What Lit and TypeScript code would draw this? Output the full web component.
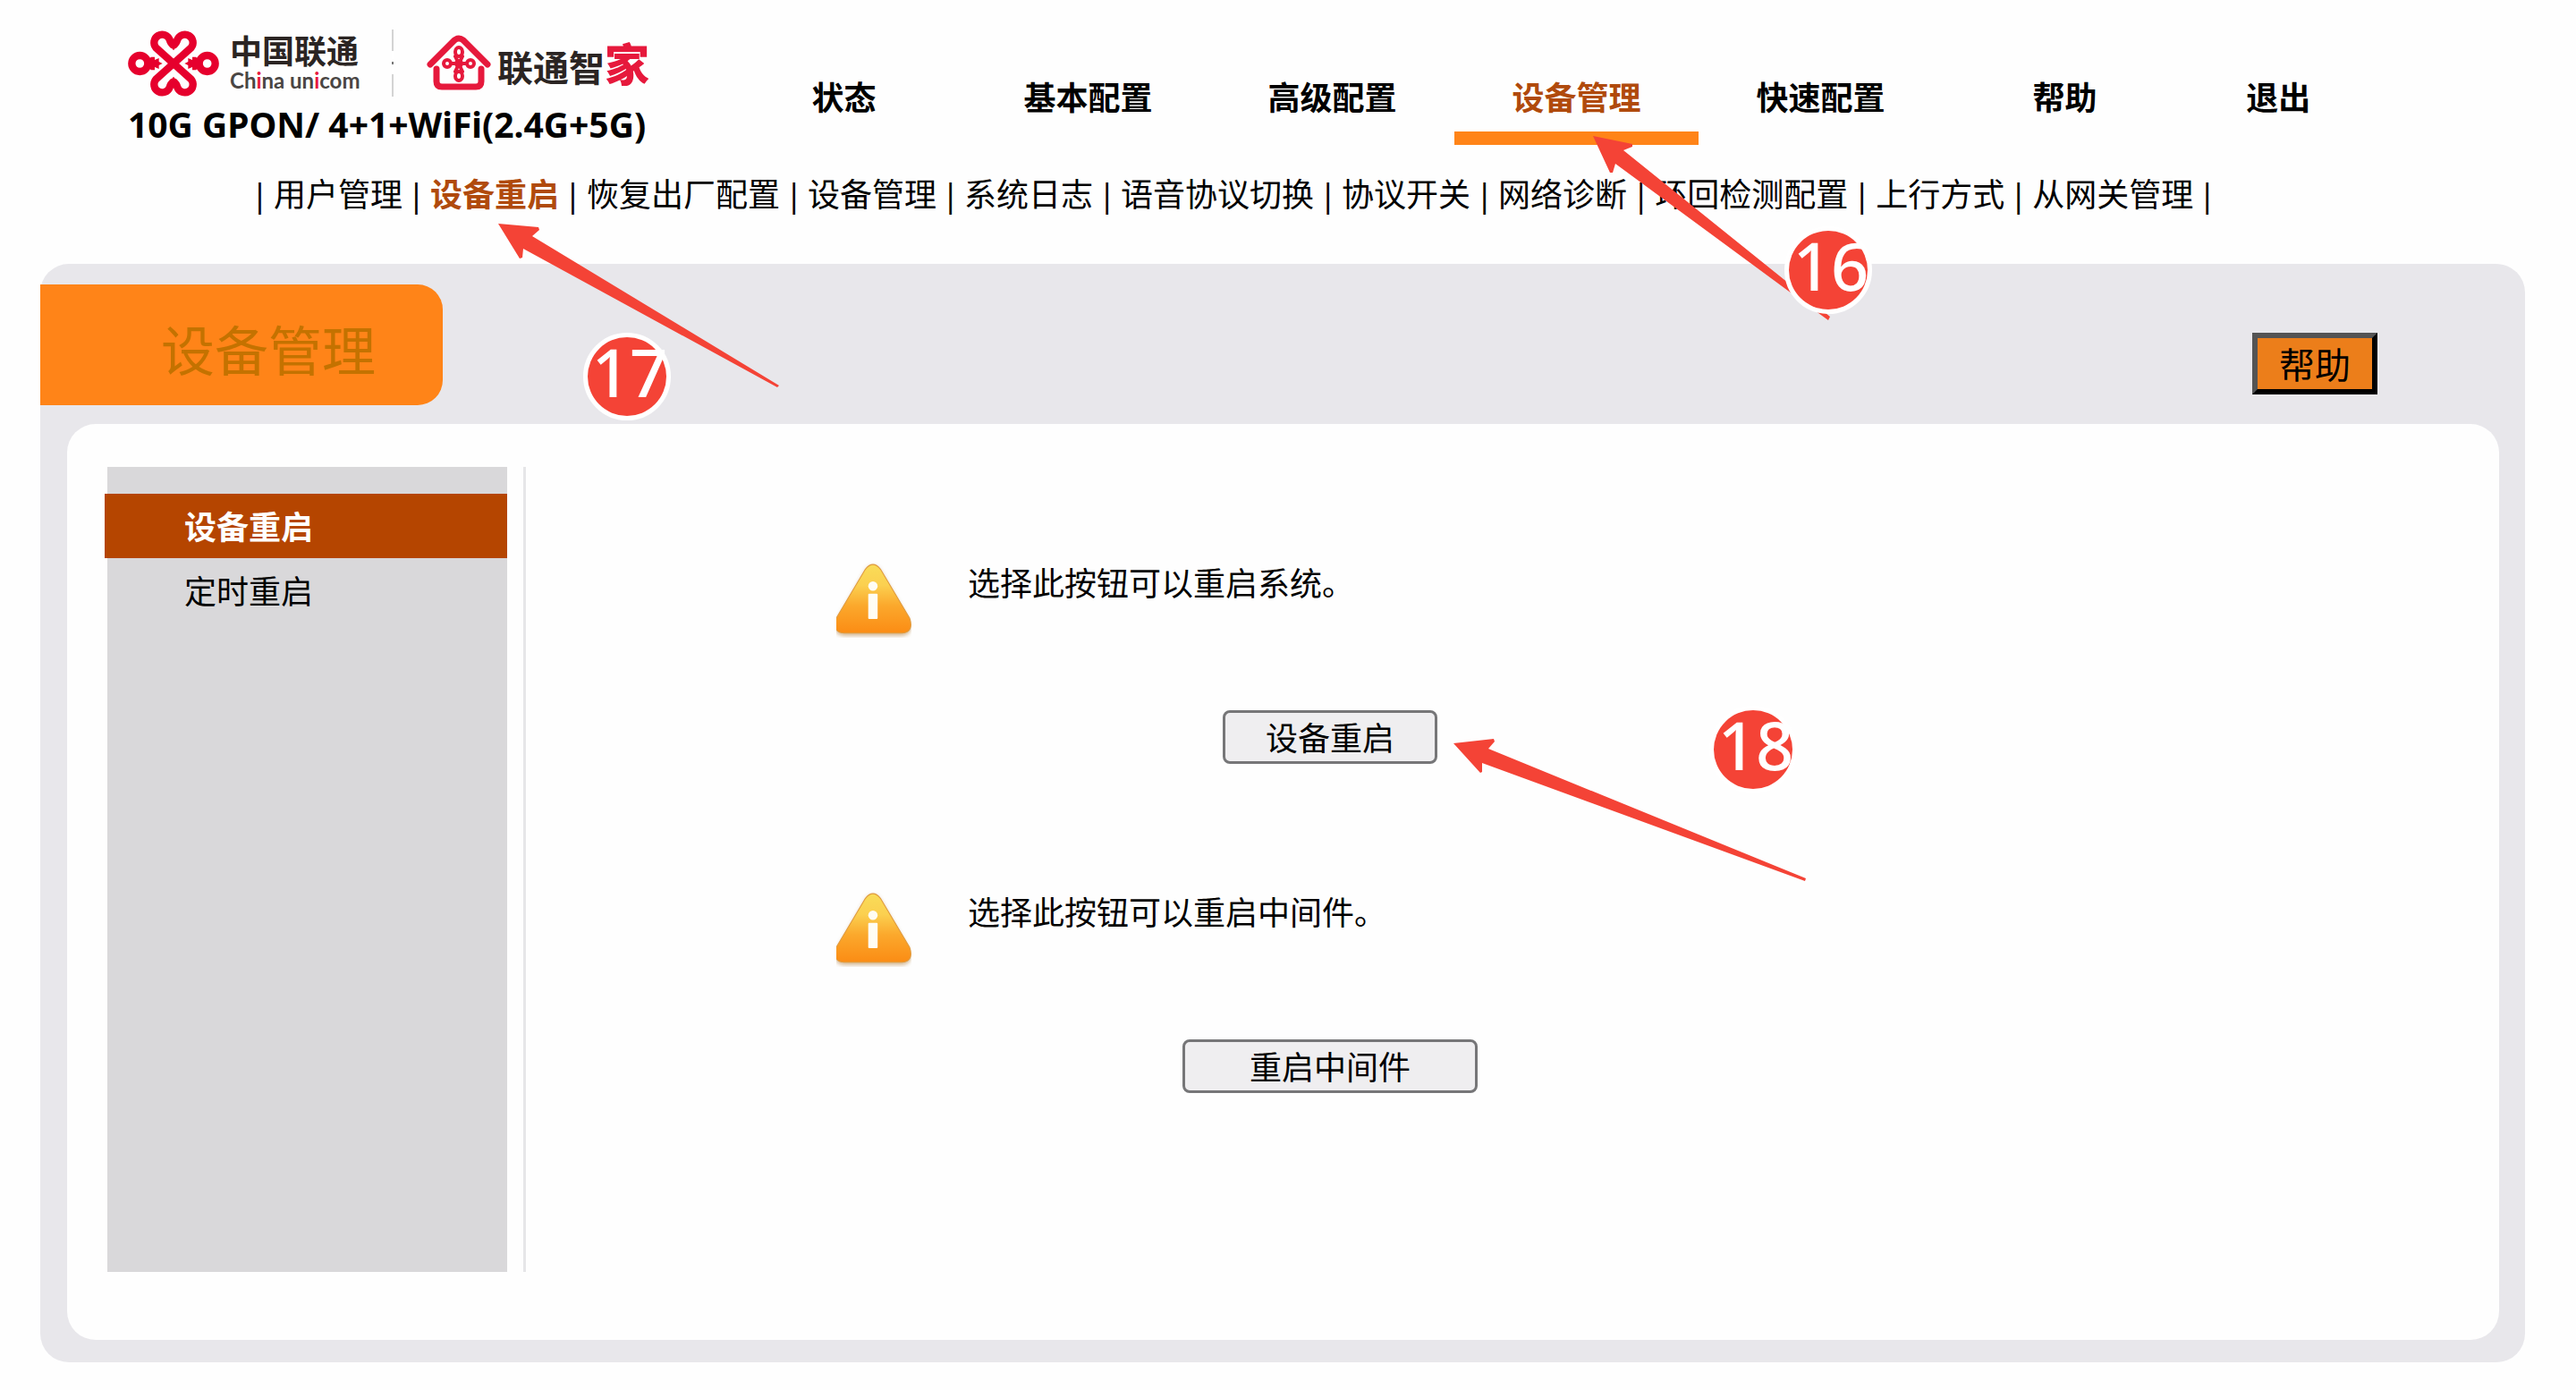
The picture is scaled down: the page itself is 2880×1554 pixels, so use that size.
import { LitElement, html, svg, css } from "lit";
import { customElement, state } from "lit/decorators.js";
import { classMap } from "lit/directives/class-map.js";

const MAIN_NAV = ["状态", "基本配置", "高级配置", "设备管理", "快速配置", "帮助", "退出"];
const SUB_NAV = [
  "用户管理",
  "设备重启",
  "恢复出厂配置",
  "设备管理",
  "系统日志",
  "语音协议切换",
  "协议开关",
  "网络诊断",
  "环回检测配置",
  "上行方式",
  "从网关管理",
];
const SIDE_NAV = ["设备重启", "定时重启"];

@customElement("brand-logo")
class BrandLogo extends LitElement {
  static styles = css`
    :host {
      display: flex;
      align-items: flex-start;
      height: 75px;
      white-space: nowrap;
      color: #2b2523;
      font-family: "Noto Sans", "Noto Sans CJK SC", sans-serif;
    }
    .knot {
      flex: none;
      width: 102px;
      height: 76px;
    }
    .carrier {
      display: flex;
      flex-direction: column;
      width: 144px;
      margin-left: 12px;
      padding-top: 6px;
    }
    .cn {
      font-size: 36px;
      line-height: 38px;
      font-weight: 700;
    }
    .en {
      font-family: Lato, "Noto Sans", sans-serif;
      font-size: 24px;
      line-height: 26px;
      font-weight: 700;
      color: #4a4644;
    }
    .dot {
      color: #e6193c;
    }
    .divider {
      width: 2px;
      height: 75px;
      margin: 0 37px 0 37px;
      background: linear-gradient(#d4d4d4 0 24px, #fff 24px 36px, #777 36px 39px, #fff 39px 50px, #d4d4d4 50px);
    }
    .house {
      flex: none;
      width: 72px;
      height: 64px;
      margin-top: 5px;
    }
    .home {
      display: flex;
      align-items: baseline;
      margin-left: 7px;
      padding-top: 3px;
      font-size: 40px;
      line-height: 72px;
      font-weight: 700;
    }
    .jia {
      font-size: 50px;
      font-weight: 900;
      color: #e6193c;
    }
  `;

  render() {
    return html`
      <svg class="knot" viewBox="40 38 306 228" aria-hidden="true">
        <g fill="none" stroke="#e6002d" stroke-width="25" stroke-linejoin="round">
          <path d="M193 152 L134 99 A27 27 0 1 1 180 72 Q183 84 193 92" />
          <path d="M193 152 L252 99 A27 27 0 1 0 206 72 Q203 84 193 92" />
          <path d="M193 152 L134 205 A27 27 0 1 0 180 232 Q183 220 193 212" />
          <path d="M193 152 L252 205 A27 27 0 1 1 206 232 Q203 220 193 212" />
          <circle cx="80" cy="152" r="27" />
          <circle cx="306" cy="152" r="27" />
        </g>
        <g fill="#e6002d">
          <path d="M176 76 h34 l-7 20 -10 12 -10 -12z" />
          <path d="M176 228 h34 l-7 -20 -10 -12 -10 12z" />
          <path d="M104 144 l14 -14 h12 v10 l14 -6 v12 l12 6 -12 6 v12 l-14 -6 v10 h-12 l-14 -14z" />
          <path d="M282 144 l-14 -14 h-12 v10 l-14 -6 v12 l-12 6 12 6 v12 l14 -6 v10 h12 l14 -14z" />
        </g>
      </svg>
      <div class="carrier">
        <span class="cn">中国联通</span>
        <span class="en">Ch<span class="dot">i</span>na un<span class="dot">i</span>com</span>
      </div>
      <span class="divider"></span>
      <svg class="house" viewBox="478 38 72 64" aria-hidden="true">
        <g fill="none" stroke="#e6193c" stroke-linecap="round" stroke-linejoin="round">
          <path stroke-width="7" d="M482 72 L509 45 Q514 41 519 45 L546 72" />
          <path stroke-width="7" d="M489 77 V91 Q489 97 495 97 H533 Q539 97 539 91 V77" />
          <g stroke-width="4">
            <ellipse cx="514" cy="58" rx="4" ry="5" />
            <ellipse cx="514" cy="85" rx="4" ry="5" />
            <circle cx="501" cy="71" r="4" />
            <circle cx="527" cy="71" r="4" />
            <circle cx="514" cy="71" r="3" />
            <path d="M510 63 L518 80 M518 63 L510 80 M506 71 H509 M519 71 H522" />
          </g>
        </g>
      </svg>
      <div class="home"><span>联通智</span><span class="jia">家</span></div>
    `;
  }
}

@customElement("warning-icon")
class WarningIcon extends LitElement {
  static styles = css`
    :host {
      display: block;
      width: 84px;
      height: 84px;
    }
    .art {
      display: block;
      width: 100%;
      height: 100%;
    }
  `;

  render() {
    return html`
      <svg class="art" viewBox="3 -1 80 80" aria-hidden="true">
        <defs>
          <linearGradient id="amber" x1="0" y1="0" x2="0" y2="1">
            <stop offset="0" stop-color="#f9dc58" />
            <stop offset="0.3" stop-color="#fbd050" />
            <stop offset="0.6" stop-color="#fba82c" />
            <stop offset="1" stop-color="#fb8c14" />
          </linearGradient>
          <filter id="soft" x="-10%" y="-10%" width="120%" height="130%">
            <feGaussianBlur stdDeviation="2" />
          </filter>
        </defs>
        <path
          d="M34 7 Q42 -3 50 7 L81 61 Q86 76 73 77 H11 Q-2 76 3 61Z"
          fill="#b98a50"
          opacity="0.6"
          filter="url(#soft)"
        />
        <path d="M34 6 Q42 -4 50 6 L81 58 Q86 73 73 74 H11 Q-2 73 3 58Z" fill="url(#amber)" stroke="#e09a3c" stroke-width="1" />
        <circle cx="42" cy="24" r="5" fill="#fffdf4" />
        <rect x="37" y="32" width="10" height="27" rx="1" fill="#fffdf4" />
      </svg>
    `;
  }
}

@customElement("step-markers")
class StepMarkers extends LitElement {
  static styles = css`
    :host {
      position: absolute;
      inset: 0 0 auto 0;
      pointer-events: none;
    }
    .canvas {
      display: block;
      width: 100%;
      height: auto;
    }
    .num {
      font-family: "Noto Sans", sans-serif;
      font-size: 74px;
      font-weight: 500;
      fill: #fff;
      text-anchor: middle;
    }
    .red {
      fill: #f44336;
    }
    .ring {
      fill: #f44336;
      stroke: #fff;
      stroke-width: 10px;
      paint-order: stroke;
    }
  `;

  private marker(label: string, x: number, y: number, arrow: string) {
    return svg`
      <path class="red" d=${arrow} />
      <circle class="ring" cx=${x} cy=${y} r="44" />
      <text class="num" x=${x + 3} y=${y + 23}>${label}</text>
    `;
  }

  render() {
    return html`
      <svg class="canvas" viewBox="0 0 2880 1554">
        ${this.marker("16", 2044, 302, "M1781 152 L1825 161 V164 L1815 168 L2046 354 L2044 358 L1806 183 L1803 193 H1800Z")}
        ${this.marker("17", 701, 421, "M557 250 L602 254 L603 257 L595 264 L871 431 L869 433 L585 278 L584 288 L581 289Z")}
        ${this.marker("18", 1960, 838, "M1625 831 L1670 826 L1671 829 L1664 837 L2019 982 L2018 985 L1657 853 L1657 863 L1655 864Z")}
      </svg>
    `;
  }
}

@customElement("app-root")
class AppRoot extends LitElement {
  @state() private side = "设备重启";

  static styles = css`
    :host {
      display: block;
      position: relative;
      min-height: 100vh;
      background: #fefefe;
      color: #000;
      font-family: "Noto Sans", "Noto Sans CJK SC", sans-serif;
      font-size: 36px;
    }
    a {
      color: inherit;
      text-decoration: none;
    }
    ul {
      list-style: none;
      margin: 0;
      padding: 0;
    }
    button {
      font: inherit;
      color: inherit;
      cursor: pointer;
    }
    .header {
      display: flex;
      align-items: flex-start;
      padding: 33px 8% 0 143px;
    }
    .brand {
      flex: none;
      width: 664px;
    }
    .model {
      margin: 0;
      font-size: 39px;
      line-height: 62px;
      font-weight: 700;
      white-space: nowrap;
    }
    .main-nav {
      flex: 1;
    }
    .main-list {
      display: flex;
    }
    .main-item {
      flex: 4 1 0;
      text-align: center;
      font-weight: 700;
      white-space: nowrap;
    }
    .main-item:last-child {
      flex: 3 1 0;
    }
    .main-link {
      display: block;
      padding-top: 40px;
      line-height: 74px;
      border-bottom: 15px solid transparent;
    }
    .main-link.active {
      color: #b04a0c;
      border-color: #ff8418;
    }
    .sub-list {
      display: flex;
      justify-content: flex-start;
      margin-top: 18px;
      padding-left: 275px;
      line-height: 60px;
      white-space: nowrap;
    }
    .sub-item {
      display: flex;
    }
    .bar {
      width: 31px;
      text-align: center;
    }
    .sub-link.active {
      color: #b04a0c;
      font-weight: 700;
    }
    .panel {
      margin: 47px 57px 0 45px;
      padding: 23px 0 25px;
      border-radius: 32px;
      background: #e8e7eb;
    }
    .panel-head {
      display: flex;
      align-items: flex-end;
      justify-content: space-between;
    }
    .title {
      box-sizing: border-box;
      width: 450px;
      margin: 0;
      padding: 14px 0 1px 135px;
      border-radius: 0 28px 28px 0;
      background: #ff8418;
      color: #c47200;
      font-size: 60px;
      font-weight: 400;
      line-height: 120px;
      white-space: nowrap;
    }
    .help {
      margin: 0 165px 12px 0;
      padding: 2px 24px 0;
      border: 6px outset #000;
      background: #ec7e1a;
      font-size: 40px;
      line-height: 55px;
    }
    .card {
      display: flex;
      margin: 21px 29px 0 30px;
      padding: 48px 45px 76px;
      border-radius: 32px;
      background: #fefefe;
    }
    .side {
      flex: none;
      box-sizing: border-box;
      width: 447px;
      min-height: 900px;
      padding-top: 30px;
      background: #d9d8da;
    }
    .side-link {
      display: block;
      padding: 4px 0 0 86px;
      line-height: 68px;
    }
    .side-link.active {
      margin-left: -3px;
      padding-left: 89px;
      background: #b54500;
      color: #fff;
      font-weight: 700;
    }
    .content {
      flex: 1;
      margin-left: 18px;
      padding: 107px 0 0 347px;
      border-left: 3px solid #e6e6e8;
    }
    .prompt {
      display: flex;
      flex-direction: column;
      width: 1104px;
      margin-bottom: 143px;
    }
    .message {
      display: flex;
      align-items: flex-start;
      gap: 63px;
      margin-bottom: 81px;
    }
    .text {
      margin: 0;
      line-height: 48px;
    }
    .action {
      align-self: center;
      min-width: 240px;
      padding: 4px 45px 0;
      border: 3px solid #767678;
      border-radius: 8px;
      background: #efeef0;
      line-height: 50px;
    }
    .action.wide {
      padding: 4px 72px 0;
    }
  `;

  private prompt(text: string, action: string, wide: boolean) {
    return html`
      <section class="prompt">
        <div class="message">
          <warning-icon></warning-icon>
          <p class="text">${text}</p>
        </div>
        <button type="button" class=${classMap({ action: true, wide })}>${action}</button>
      </section>
    `;
  }

  render() {
    return html`
      <header class="header">
        <div class="brand">
          <brand-logo></brand-logo>
          <p class="model">10G GPON/ 4+1+WiFi(2.4G+5G)</p>
        </div>
        <nav class="main-nav">
          <ul class="main-list">
            ${MAIN_NAV.map(
              (name) => html`<li class="main-item">
                <a href="#" class=${classMap({ "main-link": true, active: name === "设备管理" })}>${name}</a>
              </li>`,
            )}
          </ul>
        </nav>
      </header>
      <nav>
        <ul class="sub-list">
          ${SUB_NAV.map(
            (name) => html`<li class="sub-item">
              <span class="bar">|</span
              ><a href="#" class=${classMap({ "sub-link": true, active: name === "设备重启" })}>${name}</a>
            </li>`,
          )}
          <li class="bar">|</li>
        </ul>
      </nav>
      <main class="panel">
        <div class="panel-head">
          <h1 class="title">设备管理</h1>
          <button type="button" class="help">帮助</button>
        </div>
        <div class="card">
          <ul class="side">
            ${SIDE_NAV.map(
              (name) => html`<li>
                <a
                  href="#"
                  class=${classMap({ "side-link": true, active: name === this.side })}
                  @click=${() => (this.side = name)}
                  >${name}</a
                >
              </li>`,
            )}
          </ul>
          <div class="content">
            ${this.prompt("选择此按钮可以重启系统。", "设备重启", false)}
            ${this.prompt("选择此按钮可以重启中间件。", "重启中间件", true)}
          </div>
        </div>
      </main>
      <step-markers></step-markers>
    `;
  }
}
